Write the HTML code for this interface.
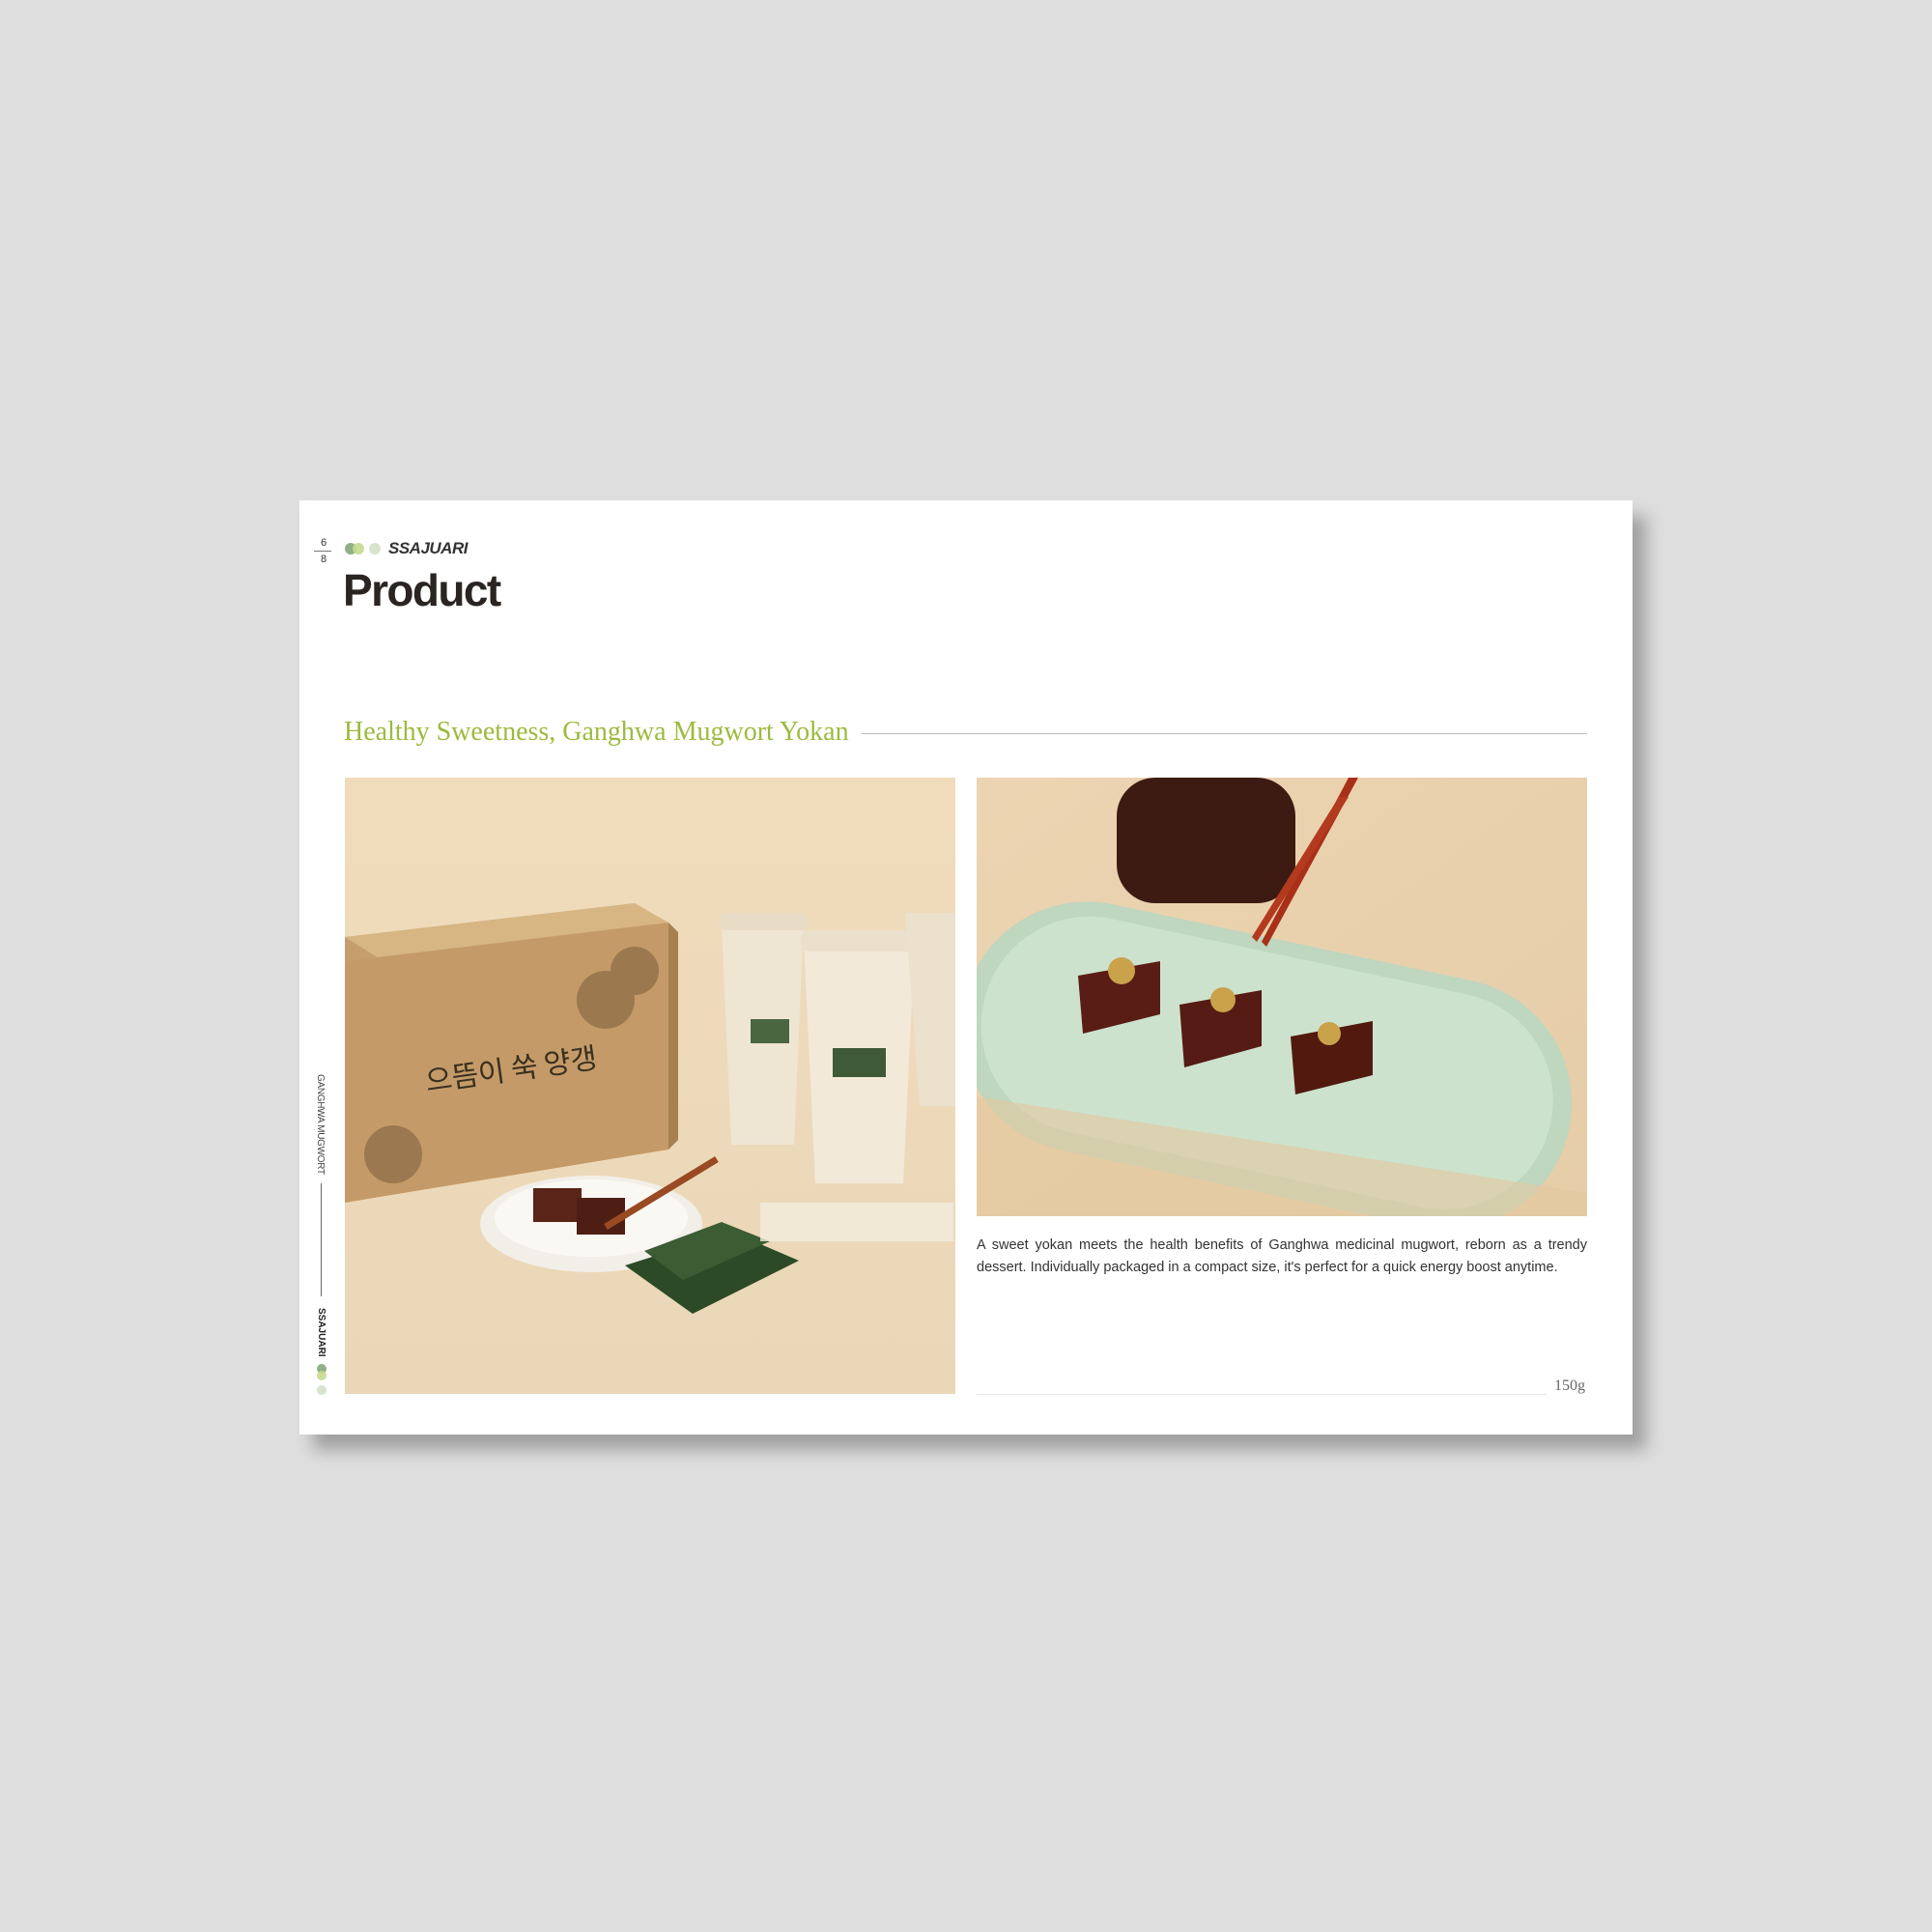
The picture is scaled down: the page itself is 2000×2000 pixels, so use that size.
<!DOCTYPE html>
<html><head><meta charset="utf-8"><style>
body{margin:0;width:2000px;height:2000px;background:#dedede;position:relative;overflow:hidden;font-family:"Liberation Sans","Noto Sans CJK KR",sans-serif}
.card{position:absolute;left:310px;top:518px;width:1380px;height:967px;background:#fff;box-shadow:14px 16px 16px rgba(0,0,0,.28)}
.a{position:absolute;white-space:nowrap}
</style></head><body>
<div class="card"></div>
<div class="a" style="left:328px;top:556px;font-size:11px;color:#333;width:14px;text-align:center">6</div>
<div class="a" style="left:325px;top:570px;width:18px;border-top:1px solid #777"></div>
<div class="a" style="left:328px;top:573px;font-size:11px;color:#333;width:14px;text-align:center">8</div>
<div class="a" style="left:357px;top:562px;width:12px;height:12px;border-radius:50%;background:#8fb088"></div>
<div class="a" style="left:365px;top:562px;width:12px;height:12px;border-radius:50%;background:#c6da8e;opacity:.9"></div>
<div class="a" style="left:382px;top:562px;width:12px;height:12px;border-radius:50%;background:#d7e3cc"></div>
<div class="a" style="left:402px;top:558px;font-size:17px;font-style:italic;font-weight:bold;color:#333;letter-spacing:-.5px">SSAJUARI</div>
<div class="a" style="left:355px;top:584px;font-size:46px;font-weight:bold;color:#2a2522;letter-spacing:-1.6px">Product</div>
<div class="a" style="left:356px;top:742px;font-family:'Liberation Serif',serif;font-size:28px;color:#9bbb3e">Healthy Sweetness, Ganghwa Mugwort Yokan</div>
<div class="a" style="left:892px;top:759px;width:751px;border-top:1px solid #bbb"></div>

<svg class="a" style="left:357px;top:805px" width="632" height="638" viewBox="0 0 632 638">
<defs><linearGradient id="lg" x1="0" y1="0" x2="0" y2="1"><stop offset="0" stop-color="#f0dcbb"/><stop offset="1" stop-color="#ead7b8"/></linearGradient></defs>
<rect width="632" height="638" fill="url(#lg)"/>
<polygon points="0,165 300,130 340,155 340,380 0,440" fill="#c69e6d"/>
<polygon points="0,165 300,130 335,150 40,190" fill="#d7b684"/>
<polygon points="335,150 345,160 345,375 335,385" fill="#a7804f"/>
<polygon points="0,190 335,150 335,385 0,440" fill="#c49b68"/>
<text x="85" y="325" font-size="30" fill="#3a3020" font-family="Noto Sans CJK KR,sans-serif" transform="rotate(-8 85 325)">으뜸이 쑥 양갱</text>
<g fill="#8a6a44" opacity=".7"><circle cx="270" cy="230" r="30"/><circle cx="300" cy="200" r="25"/><circle cx="50" cy="390" r="30"/></g>
<path d="M390 150 L475 150 L465 380 L400 380Z" fill="#efe5d3"/><rect x="387" y="140" width="92" height="18" rx="8" fill="#e8dcc6"/>
<path d="M475 170 L590 170 L578 420 L487 420Z" fill="#f2e9d8"/><rect x="472" y="158" width="122" height="22" rx="9" fill="#ebe0cb"/>
<path d="M580 140 L632 140 L632 340 L595 340Z" fill="#ece1cd"/>
<rect x="505" y="280" width="55" height="30" fill="#3f5a36"/>
<rect x="420" y="250" width="40" height="25" fill="#4a6640"/>
<ellipse cx="255" cy="462" rx="115" ry="50" fill="#f2efe8"/><ellipse cx="255" cy="456" rx="100" ry="40" fill="#faf8f3"/>
<rect x="195" y="425" width="50" height="35" fill="#5a2418"/><rect x="240" y="435" width="50" height="38" fill="#4e1e14"/>
<line x1="270" y1="465" x2="385" y2="395" stroke="#9a4a22" stroke-width="7"/>
<polygon points="290,505 400,470 470,500 360,555" fill="#2d4a27"/>
<polygon points="310,490 390,460 440,480 350,520" fill="#3c5c33"/>
<rect x="430" y="440" width="200" height="40" fill="#f3ecdc" opacity=".8"/>
</svg>

<svg class="a" style="left:1011px;top:805px" width="632" height="454" viewBox="0 0 632 454">
<defs><linearGradient id="rg" x1="0" y1="0" x2="1" y2="1"><stop offset="0" stop-color="#ecd4b2"/><stop offset="1" stop-color="#e6cda8"/></linearGradient></defs>
<rect width="632" height="454" fill="url(#rg)"/>
<rect x="145" y="0" width="185" height="130" rx="40" fill="#3d1a12"/>
<g transform="rotate(12 310 300)"><rect x="-20" y="170" width="640" height="260" rx="130" fill="#bfd6bf"/><rect x="0" y="185" width="600" height="225" rx="112" fill="#cde2cd"/></g>
<polygon points="0,330 0,454 632,454 632,430" fill="#e2c89f" opacity=".6"/>
<polygon points="105,205 190,190 190,245 110,265" fill="#5a1d15"/>
<polygon points="210,235 295,220 295,278 215,300" fill="#561b14"/>
<polygon points="325,268 410,252 410,308 330,328" fill="#52190f"/>
<circle cx="150" cy="200" r="14" fill="#c9a24a"/><circle cx="255" cy="230" r="13" fill="#c9a24a"/><circle cx="365" cy="265" r="12" fill="#c9a24a"/>
<polygon points="385,0 395,0 300,175 295,170" fill="#a83018"/><polygon points="375,20 385,20 290,170 285,165" fill="#b33a1e"/>
</svg>

<div class="a" style="left:1011px;top:1278px;width:632px;font-size:14.5px;line-height:23px;color:#333;text-align:justify;white-space:normal;text-align-last:left">A sweet yokan meets the health benefits of Ganghwa medicinal mugwort, reborn as a trendy dessert. Individually packaged in a compact size, it's perfect for a quick energy boost anytime.</div>
<div class="a" style="left:1011px;top:1443px;width:590px;border-top:1px solid #e6e6e6"></div>
<div class="a" style="left:1609px;top:1426px;font-family:'Liberation Serif',serif;font-size:16px;color:#666">150g</div>

<div class="a" style="left:325px;top:1112px;font-size:10px;color:#444;transform:rotate(90deg) translate(0,-12px);transform-origin:0 0;letter-spacing:-.3px">GANGHWA MUGWORT</div>
<div class="a" style="left:332px;top:1225px;height:117px;border-left:1px solid #666"></div>
<div class="a" style="left:325px;top:1354px;font-size:10px;font-weight:bold;color:#222;transform:rotate(90deg) translate(0,-13px);transform-origin:0 0">SSAJUARI</div>
<div class="a" style="left:328px;top:1412px;width:10px;height:10px;border-radius:50%;background:#8fb088"></div>
<div class="a" style="left:328px;top:1419px;width:10px;height:10px;border-radius:50%;background:#c6da8e;opacity:.9"></div>
<div class="a" style="left:328px;top:1434px;width:10px;height:10px;border-radius:50%;background:#d7e3cc"></div>
</body></html>
